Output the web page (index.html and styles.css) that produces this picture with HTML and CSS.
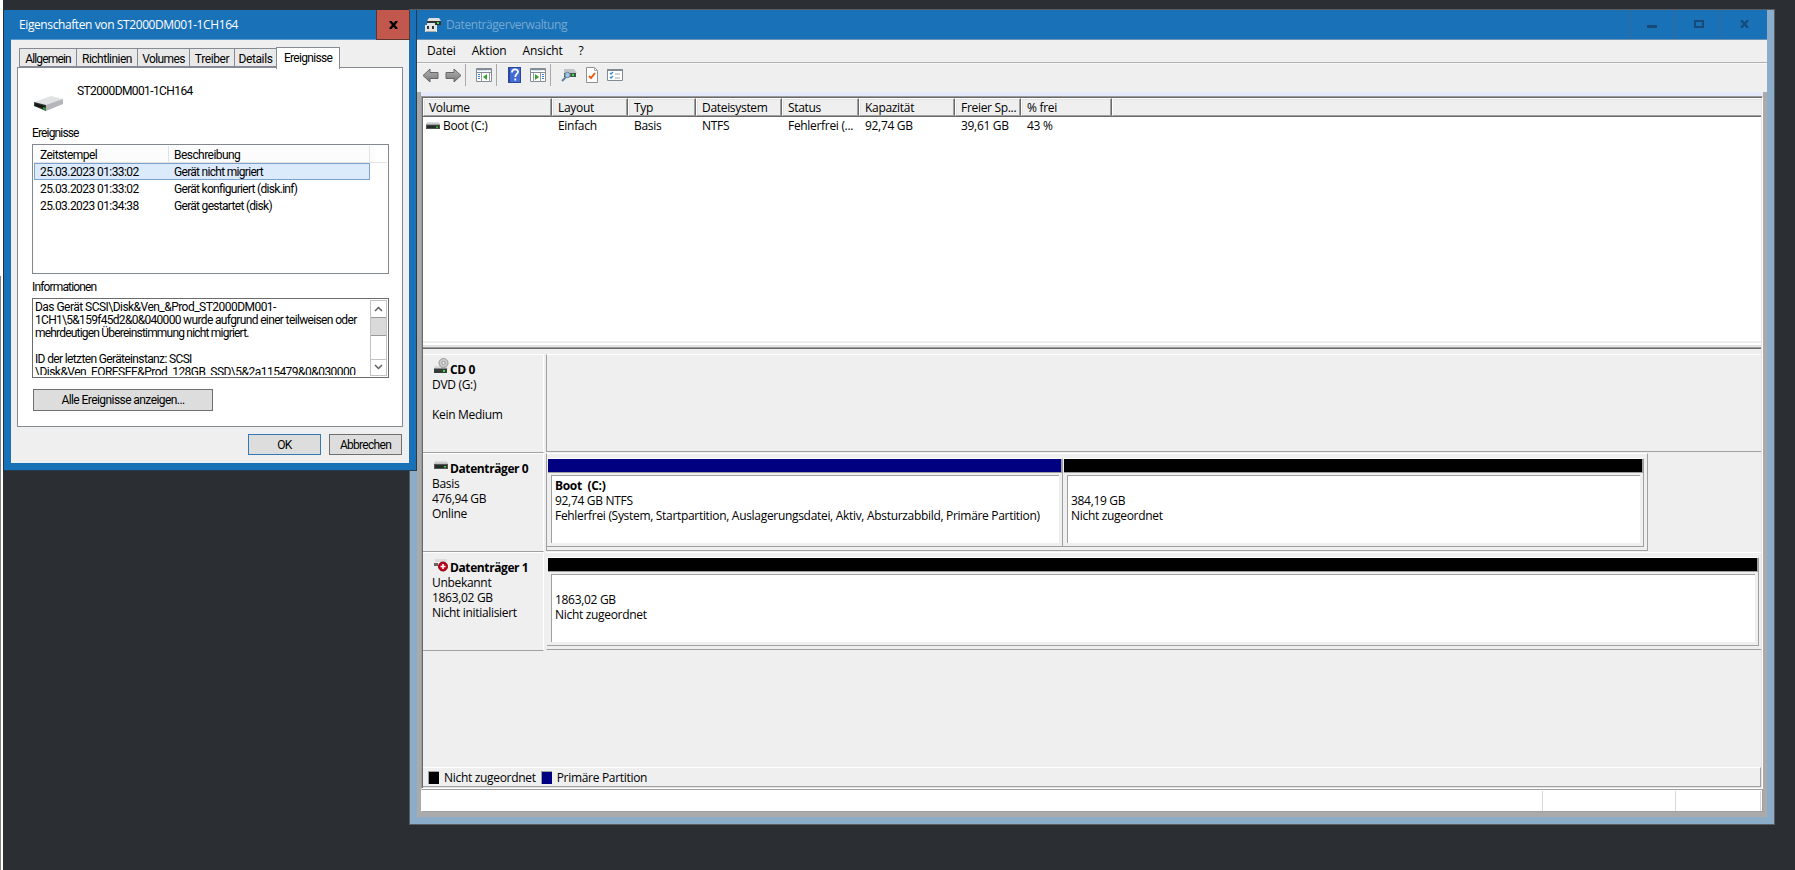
FILE: index.html
```html
<!DOCTYPE html>
<html lang="de">
<head>
<meta charset="utf-8">
<title>Datenträgerverwaltung</title>
<link rel="stylesheet" href="styles.css">
</head>
<body>
<svg width="0" height="0" class="defs">
  <defs>
    <linearGradient id="lid" x1="0" x2="0" y1="0" y2="1"><stop offset="0" stop-color="#e2e2e2"/><stop offset="1" stop-color="#b9bbbd"/></linearGradient>
    <linearGradient id="arrow" x1="0" x2="0" y1="0" y2="1"><stop offset="0" stop-color="#b5b5b5"/><stop offset="1" stop-color="#777"/></linearGradient>
    <symbol id="drive" viewBox="0 0 14 8" preserveAspectRatio="none"><path d="M1 0h12l1 3H0z" fill="url(#lid)"/><path d="M0 3h14v5H0z" fill="#555"/><path d="M1 4h12v3H1z" fill="#252b28"/><path d="M10 5h2v1.500h-2z" fill="#35e835"/></symbol>
  </defs>
</svg>
<div class="desktop">
  <div class="edge"></div>
  <main class="window manager">
    <div class="titlebar">
      <svg class="app-icon" width="16" height="16" viewBox="0 0 16 16"><path d="M4 1h10l2 3H2z" fill="#dedede"/><path d="M2 4h14v4H2z" fill="#333"/><path d="M12 5h2v2h-2z" fill="#3fdc4d"/><path d="M2 6h8v2H2zM0 8h12v7H0z" fill="#e5e5e5"/><path d="M2 9h2v3H2zM7 9h2v3H7z" fill="#343434"/><path d="M1 14h10v1H1z" fill="#aaa"/></svg>
      <span class="caption">Datenträgerverwaltung</span>
      <div class="controls">
        <span><svg class="min" width="10" height="3"><path d="M0 0h10v3H0z" fill="#174a76"/></svg></span>
        <span><svg width="10" height="8"><path d="M1 1h8v6H1z" fill="none" stroke="#174a76" stroke-width="2"/></svg></span>
        <span><svg width="9" height="8"><path d="M1 0l7 8M8 0L1 8" fill="none" stroke="#174a76" stroke-width="2.2"/></svg></span>
      </div>
    </div>
    <nav class="menu"><span>Datei</span><span>Aktion</span><span>Ansicht</span><span>?</span></nav>
    <div class="toolbar">
      <svg width="17" height="15" viewBox="0 0 17 15"><path d="M1 7.5 8 1v3.500h8v6H8V14z" fill="url(#arrow)" stroke="#666"/></svg>
      <svg class="t2" width="17" height="15" viewBox="0 0 17 15"><path d="M16 7.500 9 1v3.500H1v6h8V14z" fill="url(#arrow)" stroke="#666"/></svg>
      <i class="sep"></i>
      <svg class="t3" width="16" height="14" viewBox="0 0 16 14"><path d="M.5.500h15v13H.5z" fill="#fff" stroke="#858c93"/><path d="M1 1h14v1H1zM1 4h14v1H1z" fill="#858c93"/><path d="M2 2h9v1H2zM12 2h1v1h-1zM14 2h1v1h-1z" fill="#c9dff2"/><path d="M5 5h1v9H5zM13 5h1v9h-1z" fill="#969ca2"/><path d="M2 6h2v1H2zM2 8h2v1H2zM2 10h2v1H2z" fill="#3d83c9"/><path d="M11 6v6L7 9z" fill="#35a02a"/></svg>
      <i class="sep s2"></i>
      <svg class="t4" width="13" height="16" viewBox="0 0 13 16"><path d="M0 0h13v16H0z" fill="#2c469d"/><path d="M2 1h10v14H2z" fill="#426bd5"/><path d="M4 5.500c0-4 6-4 6-.8 0 2.300-2.700 2.300-2.700 5.300M7.300 11.500v2" fill="none" stroke="#fff" stroke-width="1.800"/></svg>
      <svg class="t5" width="16" height="14" viewBox="0 0 16 14"><path d="M.5.500h15v13H.5z" fill="#fff" stroke="#858c93"/><path d="M1 1h14v1H1zM1 4h14v1H1z" fill="#858c93"/><path d="M2 2h9v1H2zM12 2h1v1h-1zM14 2h1v1h-1z" fill="#c9dff2"/><path d="M3 5h1v9H3zM10 5h1v9h-1z" fill="#969ca2"/><path d="M12 6h2v1h-2zM12 8h2v1h-2zM12 10h2v1h-2z" fill="#3d83c9"/><path d="M5 6v6l4-3z" fill="#35a02a"/></svg>
      <i class="sep s3"></i>
      <svg class="t6" width="16" height="13" viewBox="0 0 16 13"><path d="M3 0h10l3 4H3z" fill="#c1c5c7"/><path d="M3 4h12v4H3z" fill="#46504c"/><path d="M11 5h2v2h-2z" fill="#37e347"/><path d="M1 12l4-4" stroke="#617f98" stroke-width="2"/><circle cx="6.500" cy="6" r="2.700" fill="#9ec7e2" stroke="#65849b"/></svg>
      <svg class="t7" width="12" height="16" viewBox="0 0 12 16"><path d="M.5.500h8l3 3v12H.5z" fill="#fff" stroke="#909090"/><path d="M8.500.500v3h3" fill="none" stroke="#aaa"/><path d="M3 9l2 2 4-5" fill="none" stroke="#f05a13" stroke-width="2"/></svg>
      <svg class="t8" width="16" height="12" viewBox="0 0 16 12"><path d="M.5.500h15v11H.5z" fill="#fff" stroke="#828a94"/><path d="M0 0h16v2H0z" fill="#828a94"/><path d="M3 4l1 1 2-2M3 8l1 1 2-2" fill="none" stroke="#328bc9" stroke-width="1.300"/><path d="M8 5h5M8 9h5" stroke="#a6a6a6"/></svg>
    </div>
    <div class="frame">
      <div class="strip"></div>
      <div class="panes">
        <div class="grid head"><span>Volume</span><span>Layout</span><span>Typ</span><span>Dateisystem</span><span>Status</span><span>Kapazität</span><span>Freier Sp...</span><span>% frei</span><span></span></div>
        <div class="grid volume"><span><svg width="14" height="7"><use href="#drive" width="14" height="7"/></svg>Boot (C:)</span><span>Einfach</span><span>Basis</span><span>NTFS</span><span>Fehlerfrei (...</span><span>92,74 GB</span><span>39,61 GB</span><span>43 %</span></div>
        <div class="splitter"></div>
        <section class="disk">
          <div class="info"><b><svg class="cd" width="15" height="15" viewBox="0 0 15 15"><path d="M1 8h12l1 3H0z" fill="#d6d6d6"/><circle cx="9.500" cy="5" r="4.500" fill="#ccc" stroke="#999"/><circle cx="9.500" cy="5" r="1.700" fill="#eee" stroke="#999"/><path d="M0 10.500h13v4.500H0z" fill="#353b38"/><path d="M9 12h2v2H9z" fill="#35e835"/></svg>CD 0</b><span>DVD (G:)</span><span></span><span>Kein Medium</span></div>
          <div class="area empty"></div>
        </section>
        <section class="disk">
          <div class="info"><b><svg width="14" height="8"><use href="#drive" width="14" height="8"/></svg>Datenträger 0</b><span>Basis</span><span>476,94 GB</span><span>Online</span></div>
          <div class="area partial">
            <div class="part primary"><div class="bar"></div><div class="well"><b>Boot&nbsp; (C:)</b><span>92,74 GB NTFS</span><span>Fehlerfrei (System, Startpartition, Auslagerungsdatei, Aktiv, Absturzabbild, Primäre Partition)</span></div></div>
            <div class="part"><div class="bar"></div><div class="well"><b></b><span>384,19 GB</span><span>Nicht zugeordnet</span></div></div>
          </div>
        </section>
        <section class="disk last">
          <div class="info"><b><svg class="fault" width="14" height="13"><path d="M1 0h12v3H1z" fill="#ddd"/><path d="M0 4h4v3H0z" fill="#666"/><circle cx="9" cy="7.500" r="4.500" fill="#c40018" stroke="#8c0010"/><path d="M6.500 7.500h5M9 5v5" stroke="#fff" stroke-width="1.600"/></svg>Datenträger 1</b><span>Unbekannt</span><span>1863,02 GB</span><span>Nicht initialisiert</span></div>
          <div class="area full">
            <div class="part"><div class="bar"></div><div class="well"><b></b><span>1863,02 GB</span><span>Nicht zugeordnet</span></div></div>
          </div>
        </section>
        <div class="legend"><i></i><span>Nicht zugeordnet</span><i class="navy"></i><span>Primäre Partition</span></div>
      </div>
      <footer class="status"><span></span><span></span><span></span></footer>
    </div>
  </main>

  <aside class="window dialog">
    <div class="dialog-title"><span>Eigenschaften von ST2000DM001-1CH164</span><div class="close"><svg width="9" height="8"><path d="M1 0l7 8M8 0L1 8" fill="none" stroke="#000" stroke-width="2.400"/></svg></div></div>
    <div class="dialog-body">
      <div class="tabs"><span>Allgemein</span><span>Richtlinien</span><span>Volumes</span><span>Treiber</span><span>Details</span><span class="active">Ereignisse</span></div>
      <div class="page">
        <div class="device"><svg width="29" height="15" viewBox="0 0 29 15"><path d="M0 6L17 0l12 3-16 7z" fill="#e1e2e4"/><path d="M12 9L29 3v5l-17 7z" fill="#b5b6ba"/><path d="M0 6l12 3v6L0 10z" fill="#393c3b"/><path d="M1 7l10 3v3L1 10z" fill="#171917"/><path d="M9 11l3 1v2l-3-1z" fill="#28a431"/></svg><span>ST2000DM001-1CH164</span></div>
        <label>Ereignisse</label>
        <div class="events">
          <div class="event header"><span>Zeitstempel</span><span>Beschreibung</span><span></span></div>
          <div class="event selected"><span>25.03.2023 01:33:02</span><span>Gerät nicht migriert</span></div>
          <div class="event"><span>25.03.2023 01:33:02</span><span>Gerät konfiguriert (disk.inf)</span></div>
          <div class="event"><span>25.03.2023 01:34:38</span><span>Gerät gestartet (disk)</span></div>
        </div>
        <label>Informationen</label>
        <div class="details">
          <div class="message"><span class="wide">Das Gerät SCSI\Disk&amp;Ven_&amp;Prod_ST2000DM001-</span><br><span class="digits">1CH1\5&amp;159f45d2&amp;0&amp;040000</span> wurde aufgrund einer teilweisen oder<br><span class="tight">mehrdeutigen Übereinstimmung nicht migriert.</span><br><br>ID der letzten Geräteinstanz: SCSI<br><span class="path">\Disk&amp;Ven_FORESEE&amp;Prod_128GB_SSD\5&amp;2a115479&amp;0&amp;030000</span></div>
          <div class="scroll"><svg width="17" height="17"><path d="M4 10l3.500-3.500L11 10" fill="none" stroke="#606060" stroke-width="1.500"/></svg><i></i><svg width="17" height="17"><path d="M4 5l3.500 3.500L11 5" fill="none" stroke="#606060" stroke-width="1.500"/></svg></div>
        </div>
        <button class="all">Alle Ereignisse anzeigen...</button>
      </div>
      <div class="actions"><button class="default">OK</button><button>Abbrechen</button></div>
    </div>
  </aside>
</div>
</body>
</html>
```

FILE: styles.css
```css
* { box-sizing: border-box; }
body { margin: 0; font: 12px/15px "Open Sans", "Noto Sans", sans-serif; color: #000; }
svg { display: block; flex: none; }
.defs { position: absolute; }
.desktop { position: relative; width: 1795px; height: 870px; overflow: hidden; background: #2b2f33; }
.edge { width: 3px; height: 870px; background: linear-gradient(#808080, #808080) 0 276px / 1px 600px no-repeat #fff; }
.window { position: absolute; display: flex; flex-direction: column; }

.manager { left: 409px; top: 9px; width: 1366px; height: 816px; border: 1px solid #5a5d60; background: #8cadca; padding: 0 7px; letter-spacing: -0.31px; }
.titlebar { height: 30px; flex: none; display: flex; align-items: center; background: #1971b7; border-bottom: 1px solid #6c93b5; padding-left: 8px; }
.caption { color: #76a9d3; margin-left: 5px; flex: 1; letter-spacing: -0.42px; }
.controls { display: flex; align-self: stretch; }
.controls span { width: 46px; display: flex; align-items: center; justify-content: center; border-left: 1px solid #3a6a94; padding-bottom: 1px; }
.controls span:nth-child(1) { width: 47px; }
.min { margin-top: 5px; }
.menu { height: 23px; flex: none; background: #efefef; border-bottom: 1px solid #b1b1b1; display: flex; gap: 16px; padding: 3px 10px; letter-spacing: -0.15px; }
.toolbar { height: 29px; flex: none; background: #efefef; border-top: 1px solid #f7f7f7; display: flex; align-items: center; padding: 0 5px 6px; }
.t2 { margin-left: 6px; }
.sep { width: 1px; height: 22px; background: #a9a9a9; margin-left: 3px; }
.t3 { margin-left: 10px; }
.s2 { margin-left: 4px; }
.t4 { margin-left: 11px; }
.t5 { margin-left: 9px; }
.s3 { margin-left: 4px; }
.t6 { margin-left: 10px; }
.t7 { margin-left: 9px; }
.t8 { margin-left: 9px; }

.frame { height: 725px; flex: none; background: #aaa; padding: 0 4px 5px 4px; display: flex; flex-direction: column; }
.strip { height: 4px; background: #e5eafa; }
.panes { height: 693px; flex: none; background: #efefef; border: 1px solid; border-color: #9a9a9a #fff #fff #9a9a9a; display: flex; flex-direction: column; box-shadow: inset 1px 1px #696969, inset -1px -1px #e3e3e3; padding: 1px; }
.grid { display: grid; grid-template-columns: 129px 76px 68px 86px 77px 96px 66px 91px 1fr; flex: none; }
.head { height: 19px; border-bottom: 1px solid #696969; }
.head span { border: 1px solid; border-color: #fff #696969 #a0a0a0 #fff; padding: 1px 0 0 5px; background: #efefef; box-shadow: inset -1px 0 #a0a0a0, inset 1px 1px #e3e3e3; }
.head span:last-child { border-right: 0; box-shadow: inset 0 1px #e3e3e3; }
.volume { height: 224px; background: #fff; padding-top: 1px; align-content: start; }
.volume span { padding-left: 6px; white-space: nowrap; }
.volume span:first-child { display: flex; align-items: center; gap: 3px; padding-left: 3px; }
.splitter { height: 8px; flex: none; border-bottom: 1px solid #696969; background: linear-gradient(#efefef 0 2px, #fff 2px 4px, #e3e3e3 4px 6px, #a0a0a0 6px); }
.disk { height: 99px; flex: none; display: flex; }
.splitter + .disk { margin-top: 5px; }
.info { width: 121px; flex: none; display: flex; flex-direction: column; border-top: 1px solid #fff; border-bottom: 1px solid #a0a0a0; border-right: 1px solid #fff; padding: 6px 0 0 9px; }
.info b { height: 16px; display: flex; align-items: flex-end; gap: 2px; white-space: nowrap; padding-left: 2px; letter-spacing: -0.4px; }
.info b svg { align-self: flex-start; margin-top: 1px; }
.info span { height: 15px; }
.info b .cd { margin: -3px -1px 0 0; }
.info b .fault { margin-top: 0; }
.area { flex: 1; border-top: 1px solid #fff; margin-left: 2px; border-left: 1px solid #a0a0a0; border-bottom: 1px solid #a0a0a0; margin-bottom: 1px; display: flex; padding: 4px 3px 3px 0; }
.area.partial { flex: 0 0 1102px; border-right: 1px solid #a0a0a0; }
.area.full { border-left-color: #efefef; padding-right: 2px; }
.part { border-right: 1px solid #a0a0a0; border-bottom: 1px solid #a0a0a0; border-top: 1px solid #fff; padding-left: 1px; flex: 1; display: flex; flex-direction: column; }
.part.primary { flex: 0 0 516px; }
.bar { height: 14px; flex: none; background: #000; border-bottom: 1px solid #a0a0a0; border-right: 1px solid #a0a0a0; }
.primary .bar { background: #000080; }
.well { flex: 1; margin: 2px 3px 3px 3px; border-top: 1px solid #a0a0a0; border-left: 1px solid #a0a0a0; background: #fff; padding: 2px 0 0 3px; white-space: nowrap; }
.well b, .well span { display: block; height: 15px; }
.legend { margin-top: auto; height: 20px; flex: none; display: flex; align-items: center; border-top: 1px solid #fff; border-bottom: 1px solid #a0a0a0; border-right: 1px solid #a0a0a0; padding-left: 5px; }
.legend i { width: 11px; height: 13px; background: #000; border: 1px solid #a0a0a0; border-width: 1px 0 0 1px; }
.legend span { margin: 0 5px; }
.legend .navy { background: #000080; }
.status { height: 23px; flex: none; background: #fff; border: 1px solid #a0a0a0; border-left-color: #fff; display: flex; justify-content: flex-end; padding: 1px 1px 0; }
.status span { width: 85px; border-right: 1px solid #d7d7d7; }
.status span:nth-child(1), .status span:nth-child(2) { width: 133px; }

.dialog { left: 4px; top: 10px; width: 413px; height: 460px; background: #1971b7; border-right: 1px solid #253b50; padding: 0 7px; box-shadow: 0 1px #253b50; }
.dialog-title { height: 30px; flex: none; display: flex; padding-left: 8px; line-height: 29px; color: #fff; letter-spacing: -0.4px; border-bottom: 1px solid #5f9acb; white-space: nowrap; }
.close { margin-left: auto; margin-right: -1px; width: 34px; height: 30px; background: #c1574d; border: 1px solid #5e342f; border-top: 0; display: flex; align-items: center; justify-content: center; }
.dialog-body { width: 398px; height: 423px; background: #efefef; padding: 7px 6px; font-family: Roboto, "Open Sans", sans-serif; letter-spacing: -0.7px; }
.tabs { height: 20px; display: flex; align-items: flex-end; padding-left: 2px; }
.tabs span { height: 19px; border: 1px solid #868a93; border-right: 0; background: #e9e9e9; text-align: center; white-space: nowrap; line-height: 20px; width: 57px; }
.tabs span:nth-child(1) { letter-spacing: -0.85px; }
.tabs span:nth-child(2) { width: 61px; letter-spacing: -0.5px; }
.tabs span:nth-child(3) { width: 52px; letter-spacing: -0.6px; }
.tabs span:nth-child(4) { width: 45px; letter-spacing: -0.4px; }
.tabs span:nth-child(5) { width: 42px; letter-spacing: -0.4px; }
.tabs .active { position: relative; width: 64px; height: 22px; align-self: flex-start; border: 1px solid #868a93; border-bottom: 0; background: #fff; z-index: 1; }
.page { height: 360px; border: 1px solid #868a93; background: #fff; padding: 0 13px 0 14px; }
.device { display: flex; padding: 16px 0 0 2px; height: 58px; }
.device svg { margin-top: 12px; }
.device span { margin-left: 14px; letter-spacing: -0.6px; }
.page label { display: block; height: 18px; letter-spacing: -0.85px; }
.events { height: 130px; border: 1px solid #828790; padding: 1px; margin-bottom: 6px; }
.event { height: 17px; width: 336px; display: flex; border: 1px solid transparent; }
.event span { padding-left: 5px; line-height: 16px; white-space: nowrap; }
.event span:first-child { width: 134px; letter-spacing: -0.57px; }
.event.header { width: auto; border: 0; border-bottom: 1px solid #e3e3e3; letter-spacing: -0.55px; }
.header span { background: #fcfcfc; border-right: 1px solid #e3e3e3; line-height: 18px; }
.event.header span:first-child { padding-left: 6px; width: 135px; }
.header span:nth-child(2) { width: 201px; }
.header span:last-child { border: 0; }
.event.selected { background: #dcebfc; border-color: #7da2ce; }
.details { height: 80px; border: 1px solid #6c6c6c; display: flex; justify-content: space-between; padding: 1px; margin-bottom: 11px; }
.message { height: 75px; overflow: hidden; white-space: nowrap; line-height: 13px; padding: 1px 0 0 1px; width: 335px; letter-spacing: -0.64px; }
.wide { letter-spacing: -0.53px; }
.digits { letter-spacing: -0.7px; }
.tight { letter-spacing: -0.8px; }
.path { letter-spacing: -0.52px; }
.scroll { width: 17px; flex: none; border: 1px solid #c2c2c2; height: 76px; display: flex; flex-direction: column; }
.scroll svg { width: 15px; height: 16px; }
.scroll svg:last-child { margin-top: auto; border-top: 1px solid #c2c2c2; }
.scroll i { height: 19px; background: #dadada; border-top: 1px solid #999; border-bottom: 1px solid #999; }
button { width: 73px; height: 21px; border: 1px solid #707070; background: #ddd; font: inherit; letter-spacing: inherit; padding: 1px 0 0; color: #000; }
.all { width: 180px; height: 22px; margin-left: 1px; display: block; letter-spacing: -0.57px; }
.default { border-color: #3479b3; }
.actions { display: flex; justify-content: flex-end; gap: 8px; padding: 7px 1px; }
```
